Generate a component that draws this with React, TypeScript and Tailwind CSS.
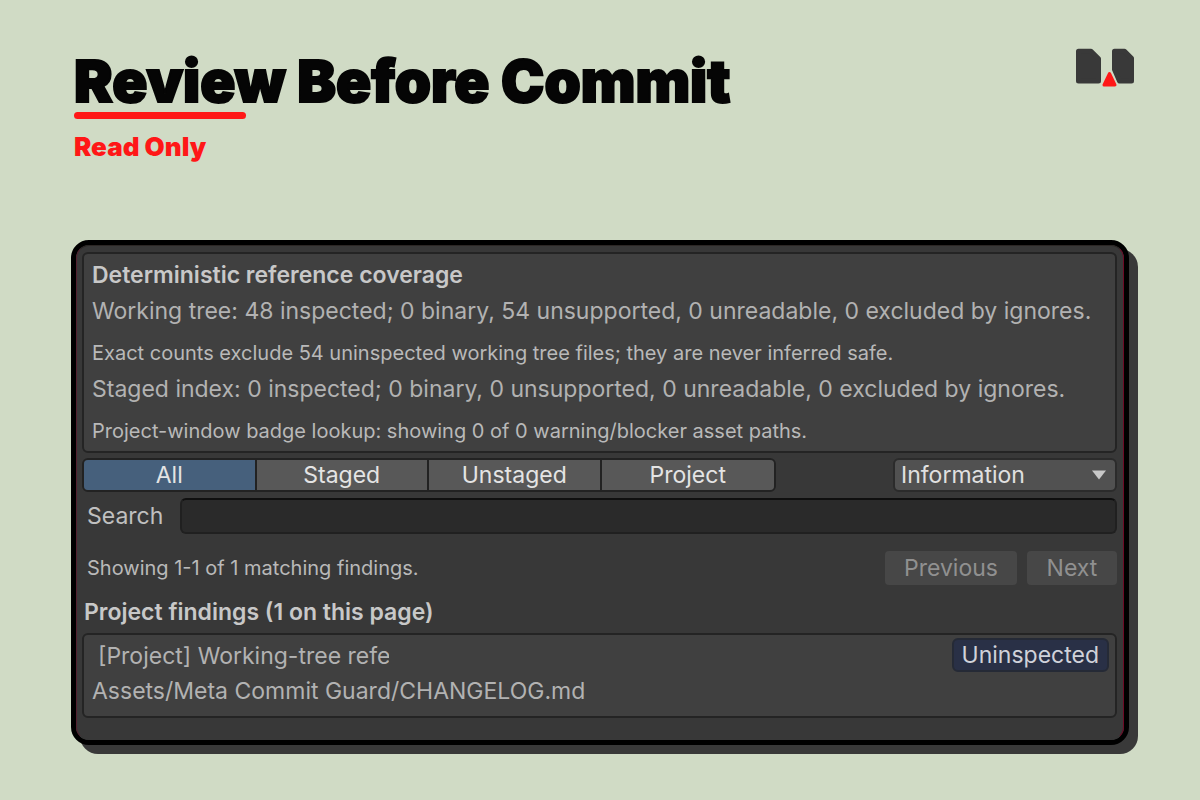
import React, { useState } from 'react';

type Scope = 'All' | 'Staged' | 'Unstaged' | 'Project';

const SCOPES: Scope[] = ['All', 'Staged', 'Unstaged', 'Project'];

const COVERAGE = [
  { text: 'Working tree: 48 inspected; 0 binary, 54 unsupported, 0 unreadable, 0 excluded by ignores.', note: false },
  { text: 'Exact counts exclude 54 uninspected working tree files; they are never inferred safe.', note: true },
  { text: 'Staged index: 0 inspected; 0 binary, 0 unsupported, 0 unreadable, 0 excluded by ignores.', note: false },
  { text: 'Project-window badge lookup: showing 0 of 0 warning/blocker asset paths.', note: true },
];

const Logo: React.FC = () => (
  <svg width="60" height="42" viewBox="0 0 60 42" aria-hidden="true">
    <g fill="#393939" stroke="#393939" strokeWidth="5" strokeLinejoin="round">
      <path d="M3.500 3.200H16L23.500 10.700V33H3.500Z" />
      <path d="M39.500 3.200H49.500L56.500 10.200V33H44.500L39.500 21.500Z" />
    </g>
    <path d="M34.500 25.500L40 37H29Z" fill="#ff1717" stroke="#ff1717" strokeWidth="3" strokeLinejoin="round" />
  </svg>
);

const Header: React.FC = () => (
  <header className="flex items-start justify-between pl-[3px]">
    <div>
      <h1 className="whitespace-nowrap pt-0.5 font-['Inter',sans-serif] text-[58px] leading-[62px] font-black text-[#050505] [-webkit-text-stroke:2px_#050505] [stroke-linejoin:round]">
        Review Before Commit
      </h1>
      <div className="h-[7px] w-[172px] rounded-full bg-[#ff1717]" />
      <p className="mt-2.5 font-['Inter',sans-serif] text-[26px] leading-9 font-black text-[#ff1717]">
        Read Only
      </p>
    </div>
    <div className="-mr-1.5">
      <Logo />
    </div>
  </header>
);

const CoverageBox: React.FC = () => (
  <section className="rounded-md border-2 border-[#242424] bg-[#404040] px-2 pt-[3px] pb-0.5">
    <h2 className="text-[23px] leading-9 font-semibold text-[#c8c8c8]">Deterministic reference coverage</h2>
    {COVERAGE.map(line => (
      <p
        key={line.text}
        className={line.note ? 'pt-1.5 text-[20px] leading-9 text-[#b9b9b9]' : 'text-[23px] leading-9 text-[#b2b2b2]'}
      >
        {line.text}
      </p>
    ))}
  </section>
);

const App: React.FC = () => {
  const [scope, setScope] = useState<Scope>('All');
  const [severity, setSeverity] = useState('Information');
  const [search, setSearch] = useState('');

  return (
    <div className="min-h-screen bg-[#d0dbc5] px-[71px] pt-12 pb-12">
      <Header />

      <main className="mt-[75px] rounded-[18px] border-5 border-black bg-[#383838] font-['Inter',sans-serif] shadow-[9px_9px_0_#393939]">
        <div className="rounded-[13px] border border-t-[#2c2725] border-r-[#6e0a26] border-b-[#383838] border-l-[#53202f] pt-1.5 pr-1.5 pb-[21px] pl-[5px]">
          <CoverageBox />

          <div className="mt-[5px] flex items-center justify-between">
            <div className="grid w-[694px] grid-cols-4 overflow-hidden rounded-md border-2 border-[#222222]">
              {SCOPES.map(name => (
                <button
                  key={name}
                  onClick={() => setScope(name)}
                  className={`h-[30px] border-r-2 border-[#222222] text-[23px] leading-[30px] text-[#e4e4e4] last:border-r-0 ${scope === name ? 'bg-[#46607c]' : 'bg-[#585858]'}`}
                >
                  {name}
                </button>
              ))}
            </div>
            <div className="relative w-[224px]">
              <select
                aria-label="Severity"
                value={severity}
                onChange={(e) => setSeverity(e.target.value)}
                className="h-[34px] w-full appearance-none rounded-md border-2 border-[#2b2b2b] bg-[#515151] px-1.5 text-[23px] leading-7 text-[#e0e0e0]"
              >
                <option>Information</option>
              </select>
              <svg className="pointer-events-none absolute top-3 right-2.5" width="16" height="10" viewBox="0 0 16 10" aria-hidden="true">
                <path d="M1 0.500H15L8 9.500Z" fill="#c8c8c8" />
              </svg>
            </div>
          </div>

          <div className="mt-1.5 flex items-center">
            <label htmlFor="search" className="w-[98px] pl-[5px] text-[23px] leading-9 text-[#c0c0c0]">Search</label>
            <input
              id="search"
              type="text"
              value={search}
              onChange={(e) => setSearch(e.target.value)}
              className="h-9 min-w-0 flex-1 rounded-md border-2 border-[#202020] border-t-[#0f0f0f] bg-[#2a2a2a] px-2 text-[23px] text-[#c8c8c8]"
            />
          </div>

          <div className="mt-4 flex items-center justify-between">
            <p className="pl-[5px] text-[20px] leading-9 text-[#b9b9b9]">Showing 1-1 of 1 matching findings.</p>
            <div className="flex gap-2.5">
              <button disabled className="h-[34px] w-[132px] rounded-sm bg-[#474747] text-[23px] leading-[34px] text-[#909090]">Previous</button>
              <button disabled className="h-[34px] w-[90px] rounded-sm bg-[#474747] text-[23px] leading-[34px] text-[#909090]">Next</button>
            </div>
          </div>

          <h2 className="mt-2 pl-0.5 text-[23px] leading-9 font-semibold text-[#c8c8c8]">Project findings (1 on this page)</h2>

          <section className="mt-[3px] rounded-md border-2 border-[#242424] bg-[#404040] px-2 pt-[3px] pb-2">
            <div className="flex items-start justify-between">
              <p className="w-[297px] overflow-hidden pl-1.5 text-[23px] leading-9 whitespace-nowrap text-[#b2b2b2]">
                [Project] Working-tree refe
              </p>
              <span className="-mr-0.5 h-[34px] rounded-md border-2 border-[#252a36] bg-[#293046] px-2 text-[23px] leading-[30px] text-[#d0d2da]">
                Uninspected
              </span>
            </div>
            <p className="text-[23px] leading-[34px] text-[#b2b2b2]">Assets/Meta Commit Guard/CHANGELOG.md</p>
          </section>
        </div>
      </main>
    </div>
  );
};

export default App;
